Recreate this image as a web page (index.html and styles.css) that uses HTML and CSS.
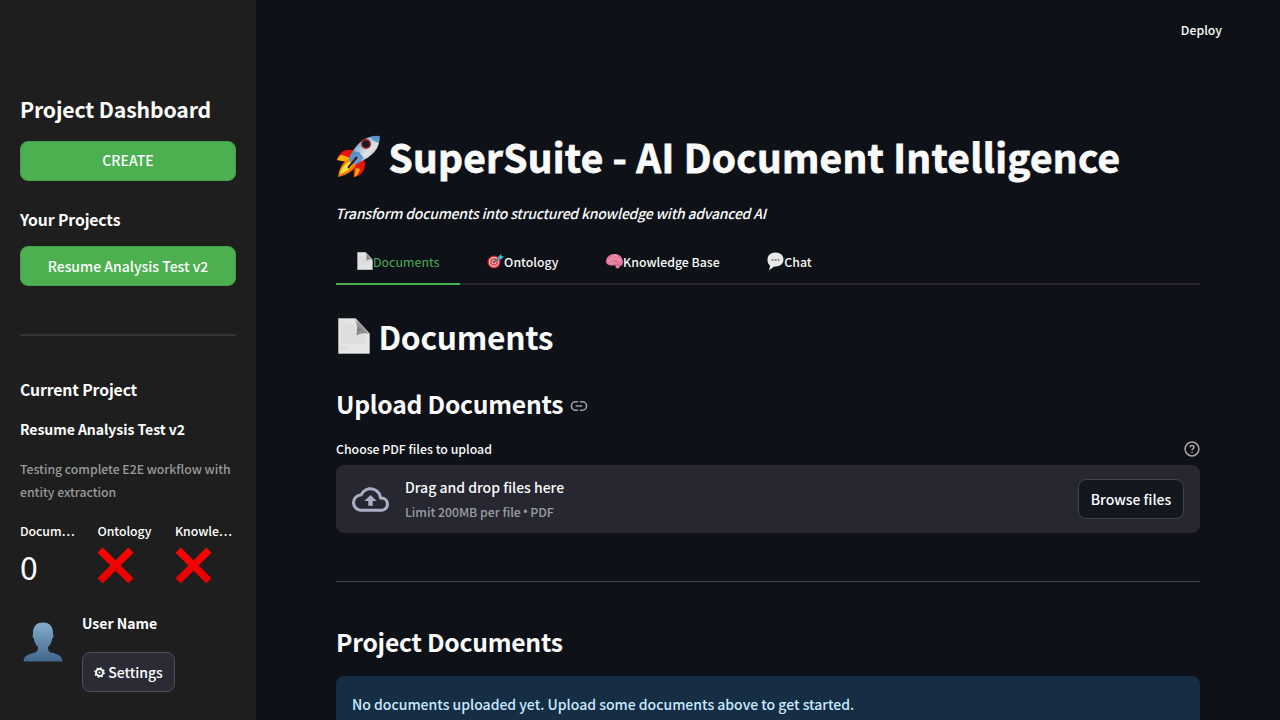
FILE: index.html
```
<!DOCTYPE html>
<html lang="en">
<head>
<meta charset="utf-8">
<title>SuperSuite</title>
<link rel="stylesheet" href="styles.css">
</head>
<body>
<svg class="defs" width="0" height="0">
  <defs>
    <linearGradient id="person" x1="0" y1="0" x2="0" y2="1"><stop offset="0" stop-color="#83adcd"/><stop offset="1" stop-color="#41658d"/></linearGradient>
    <linearGradient id="cross-fill" x1="0" y1="0" x2="0" y2="1"><stop offset="0" stop-color="#ff0500"/><stop offset="1" stop-color="#e30000"/></linearGradient>
    <linearGradient id="body-fill" x1="0" y1="0" x2="1" y2="1"><stop offset="0" stop-color="#3f7cb8"/><stop offset=".4" stop-color="#a9c4da"/><stop offset=".6" stop-color="#e4e6e6"/><stop offset="1" stop-color="#777c80"/></linearGradient>
    <linearGradient id="fold" x1="0" y1="1" x2="1" y2="0"><stop offset="0" stop-color="#4a4a4a"/><stop offset=".5" stop-color="#a8a8a8"/><stop offset="1" stop-color="#fff"/></linearGradient>
    <symbol id="cross" viewBox="0 0 36 36"><path fill="url(#cross-fill)" d="M5.500 .5 18 13 30.500 .5l5 5L23 18l12.500 12.500-5 5L18 23 5.500 35.500l-5-5L13 18 .5 5.500z"/></symbol>
    <symbol id="page" viewBox="0 0 32 37">
      <path fill="#e5e5e5" stroke="#c5c5c5" stroke-width=".6" d="M.5.5h17L31.500 16v20.500H.5z"/>
      <path stroke="#d0d0d0" stroke-width=".7" d="M3 4h6M3 7.500h13M3 9.500h14M3 11.500h14M3 13.500h14M3 15.500h14M3 17.500h24M3 19.500h25M3 21.500h25M3 23.500h24M3 25.500h23M3 30h6M3 32h8"/>
      <path fill="#777" d="M15.500.5C20 5 19 10 18.500 18c5-3 10-3 13-1z" opacity=".8"/>
      <path fill="url(#fold)" d="M17.500.5C21 4 21 9 19.500 13.500c4-2 9-1 12 2.500z"/>
    </symbol>
  </defs>
</svg>
<div class="app">
  <aside class="sidebar">
    <h2 class="side-title"><span>Project Dashboard</span></h2>
    <button class="btn-green">CREATE</button>
    <h3 class="side-heading your"><span>Your Projects</span></h3>
    <button class="btn-green project">Resume Analysis Test v2</button>
    <div class="side-rule"></div>
    <h3 class="side-heading">Current Project</h3>
    <p class="project-name">Resume Analysis Test v2</p>
    <p class="project-desc">Testing complete E2E workflow with<br>entity extraction</p>
    <div class="metrics">
      <div><div class="metric-label">Docum…</div><div class="metric-value">0</div></div>
      <div><div class="metric-label">Ontology</div><div class="metric-value"><svg width="37" height="37"><use href="#cross"/></svg></div></div>
      <div><div class="metric-label">Knowle…</div><div class="metric-value"><svg width="37" height="37"><use href="#cross"/></svg></div></div>
    </div>
    <div class="user">
      <svg class="avatar" width="40" height="40" viewBox="0 0 40 40"><path fill="url(#person)" d="M20 .5c7 0 10.500 4.500 10 12 1 .5.500 3-.8 4-.6 4-2 6.500-4.200 8.500 0 3 .5 4.500 3 5.500 5 1.500 11 2 11.500 9H.5c.5-7 6.500-7.500 11.500-9 2.500-1 3-2.500 3-5.500-2.200-2-3.600-4.500-4.200-8.500-1.300-1-1.800-3.500-.8-4C9.500 5 13 .5 20 .5z"/></svg>
      <div class="user-info">
        <p class="user-name">User Name</p>
        <button class="btn-settings"><svg width="11" height="11" viewBox="0 0 11 11"><circle cx="5.500" cy="5.500" r="3.500" fill="none" stroke="#fff" stroke-width="1.800"/><circle cx="5.500" cy="5.500" r="4.700" fill="none" stroke="#fff" stroke-width="1.300" stroke-dasharray="1.700 1.990"/><circle cx="5.500" cy="5.500" r="1" fill="#fff"/></svg><span>Settings</span></button>
      </div>
    </div>
  </aside>
  <main class="main">
    <header class="topbar"><span>Deploy</span></header>
    <section class="content">
      <h1 class="title">
        <svg width="45" height="44" viewBox="0 0 45 44">
          <path fill="#e91508" d="M1 25c2-7 7-11 14-10l5 1-8 11zM18 42c7-1 11-6 11-14l-2-6-10 10z"/>
          <path fill="#ffb000" d="M1 25c1-3 3-5 5-5l8 3-3 4zM18 42l2-9 4 1c-1 4-3 7-6 8z"/>
          <path fill="#f47b00" d="M13 24C4 29 3 36 2 42c7-2 14-4 18-12z"/>
          <path fill="#ffe23b" d="M14 26c-6 3-9 8-10 13 6-2 10-4 13-10z"/>
          <path fill="url(#body-fill)" d="M43.500 1C31 0 22 6 14 21c-1 3-1 5 1 7 2 2 4 2 7 0C37 21 44 14 43.500 1z"/>
          <path fill="#3a82c6" d="M43.500 1c-4-.6-7-.1-9 1 2 3 4 5 8 6 1-2 1-4 1-7zM17 16l6 1 5 6-5 5c-3 2-6 2-8 0s-2-4-1-7z" opacity=".75"/>
          <circle cx="30" cy="9" r="5" fill="#b91d20"/><circle cx="30" cy="9" r="3.600" fill="#131d24"/>
          <path stroke="#50100c" stroke-width="2" d="m12 33 9-11"/>
        </svg>
        <span>SuperSuite - AI Document Intelligence</span>
      </h1>
      <p class="subtitle"><span>Transform documents into structured knowledge with advanced AI</span></p>
      <nav class="tabs">
        <div class="tab active"><svg width="16" height="18"><use href="#page"/></svg><span>Documents</span></div>
        <div class="tab"><svg width="17" height="17" viewBox="0 0 17 17"><circle cx="7" cy="9" r="6.500" fill="#d72b32"/><circle cx="7" cy="9" r="4.400" fill="none" stroke="#f4d6d3" stroke-width="1.200"/><circle cx="7" cy="9" r="2" fill="none" stroke="#f4d6d3"/><path stroke="#267d92" stroke-width="1.500" d="m7 9 6-5"/><path fill="#45b5c9" d="m11 4 3-3 .5 2 2.500.5-3 3-3-.5z"/></svg><span>Ontology</span></div>
        <div class="tab"><svg width="17" height="17" viewBox="0 0 17 17"><path fill="#e8799b" d="M0 9C0 5 3 1 8 1c5-.5 8 3 9 7 0 3-1 5-3 5 0 2-2 3-4 2l-1-3c-3 1-8 1-9-3z"/><path fill="none" stroke="#fab4c8" stroke-width="1" d="M3 8c0-3 2-4 4-4M6 8c2 0 2-3 4-2s3 0 4 2M4 10c2 0 3-1 4 0M8 2c2 0 2 1 3 1"/><path fill="none" stroke="#b8476d" stroke-width=".6" d="M2 6c2 0 2-2 3-3M5 9c3 1 3-3 6-2M9 12c2-1 3-1 5 1"/></svg><span>Knowledge Base</span></div>
        <div class="tab"><svg width="17" height="18" viewBox="0 0 17 18"><path fill="#e9e9e9" d="M8.500.5c5 0 8 3 8 7s-3 7-8 7l-2 .2c-1 1.500-3 3-5 3 1-1 1.500-2.500 1.500-4C1 12 .5 10 .5 7.500c0-4 3-7 8-7z"/><path stroke="#777" stroke-width="1.500" d="M4.500 8h2m1 0h2m1 0h2"/></svg><span>Chat</span></div>
      </nav>
      <h2 class="page-heading"><svg width="32" height="36" viewBox="0 0 32 37" preserveAspectRatio="none"><use href="#page" width="32" height="37"/></svg><span>Documents</span></h2>
      <h3 class="section upload-heading"><span>Upload Documents</span><svg width="20" height="20" viewBox="0 0 24 24" fill="#9b9da1"><path d="M2 12c0-3.300 2.700-6 6-6h3v1.900H8a4.100 4.100 0 0 0 0 8.200h3V18H8c-3.300 0-6-2.700-6-6zm6-1h8v2H8zm8-5h-3v1.900h3a4.100 4.100 0 0 1 0 8.200h-3V18h3a6 6 0 0 0 0-12z"/></svg></h3>
      <div class="upload-label"><span>Choose PDF files to upload</span><svg width="16" height="16" viewBox="0 0 16 16" fill="none" stroke="#a3a4a8" stroke-width="1.500"><circle cx="8" cy="8" r="6.900"/><path d="M6 6.300C6.100 5.100 6.900 4.600 8 4.600s2 .7 2 1.700c0 1.300-2 1.500-2 3M8 10.700v1.400"/></svg></div>
      <div class="dropzone">
        <svg class="cloud" width="37" height="37" viewBox="0 0 24 24" fill="#a9aec4"><path d="M19.350 10.040A7.490 7.490 0 0 0 12 4C9.110 4 6.600 5.640 5.350 8.040A5.994 5.994 0 0 0 0 14c0 3.310 2.690 6 6 6h13c2.760 0 5-2.240 5-5 0-2.640-2.050-4.780-4.650-4.960zM19 18H6c-2.210 0-4-1.790-4-4 0-2.050 1.530-3.760 3.560-3.970l1.070-.11.5-.95A5.469 5.469 0 0 1 12 6c2.620 0 4.880 1.860 5.390 4.430l.3 1.500 1.530.11A2.980 2.980 0 0 1 22 15c0 1.650-1.350 3-3 3zM8 13h2.550v3h2.900v-3H16l-4-4z"/></svg>
        <div class="drop-text"><p class="drop-main">Drag and drop files here</p><p class="drop-sub">Limit 200MB per file <span class="bullet">•</span> PDF</p></div>
        <button class="btn-browse">Browse files</button>
      </div>
      <div class="rule"></div>
      <h3 class="section"><span>Project Documents</span></h3>
      <div class="notice">No documents uploaded yet. Upload some documents above to get started.</div>
    </section>
  </main>
</div>
</body>
</html>
```
FILE: styles.css
```
* { box-sizing: border-box; }
body { margin: 0; background: #0e1117; color: #fafafa; font-family: "Noto Sans CJK SC", "Noto Sans", sans-serif; font-size: 14px; font-weight: 500; line-height: 24px; overflow: hidden; }
h1, h2, h3, p { margin: 0; white-space: nowrap; }
svg { display: block; flex: none; }
.defs { position: absolute; }
button { font: inherit; color: #fff; border-radius: 8px; padding: 0; white-space: nowrap; }
.app { display: flex; height: 720px; overflow: hidden; }
.sidebar { width: 256px; flex: none; background: #1e1e1e; padding: 93px 20px 0; color: #fff; }
.side-title { font-size: 21.200px; letter-spacing: -.13px; font-weight: 700; line-height: 32px; margin-bottom: 16px; }
.btn-green { display: block; width: 216px; height: 40px; background: #4caf50; border: 1px solid #469f4a; line-height: 36px; padding-bottom: 2px; }
.project { padding-bottom: 0; line-height: 38px; }
.side-heading { font-size: 15.750px; letter-spacing: -.12px; font-weight: 700; line-height: 24px; }
.your { margin: 27px 0 14.400px; }
.side-rule { height: 2px; background: #343434; margin: 47.600px 0 42px; }
.project-name { font-weight: 700; letter-spacing: -.04px; margin-top: 15px; }
.project-desc { font-size: 12.300px; letter-spacing: -.035px; line-height: 23px; color: #999; margin-top: 17px; }
.metrics { display: grid; grid-template-columns: repeat(3, 61px); gap: 16.500px; margin-top: 17px; }
.metric-label { font-size: 12.300px; letter-spacing: -.06px; line-height: 20px; }
.metric-value { display: flex; align-items: flex-start; font-size: 32px; line-height: 51px; height: 52px; font-weight: 400; }
.metric-value svg { margin: 6px 0 0 -.4px; }
.user { display: flex; padding-left: 3px; gap: 19px; margin-top: 18px; }
.avatar { margin-top: 11px; }
.user-name { font-weight: 700; margin-bottom: 17px; }
.btn-settings { display: flex; width: 93px; height: 40px; align-items: center; justify-content: center; gap: 3px; background: #2b2b36; border: 1px solid #50505a; }
.btn-settings svg { margin-top: 1px; }
.main { flex: 1; min-width: 0; }
.topbar { height: 60px; padding: 0 58px; display: flex; align-items: center; justify-content: flex-end; font-size: 12.300px; }
.content { padding: 68px 80px 0; }
.title { display: flex; gap: 7.500px; align-items: center; font-size: 38.800px; letter-spacing: .28px; font-weight: 700; -webkit-text-stroke: .8px #fafafa; line-height: 56px; height: 56px; }
.title svg { margin: 2px .5px 0 -.5px; }
.subtitle { font-style: italic; letter-spacing: -.22px; margin: 17px 0 0 -.7px; }
.tabs { display: flex; height: 44px; margin-top: 16px; border-bottom: 2px solid #262730; margin-bottom: 25px; }
.tab { display: flex; align-items: center; font-size: 12.300px; height: 44px; border-bottom: 2px solid transparent; padding: 0 20px 0 21px; margin-right: 6.600px; white-space: nowrap; }
.tab svg { margin-top: -2px; }
.active { color: #4caf50; border-color: #4caf50; font-weight: 400; letter-spacing: .1px; }
.page-heading { display: flex; align-items: center; gap: 8.500px; padding-left: 2px; font-size: 31.800px; letter-spacing: -.35px; font-weight: 700; line-height: 52px; height: 52px; }
.page-heading svg { margin-top: 0; }
.section { font-size: 24.700px; letter-spacing: -.26px; font-weight: 700; line-height: 36px; }
.upload-heading { display: flex; align-items: center; gap: 6px; margin-top: 23px; }
.upload-heading svg { margin-top: 6px; }
.upload-label { display: flex; justify-content: space-between; align-items: center; font-size: 12.300px; height: 24px; margin: 16px 0 4px; }
.dropzone { display: flex; align-items: center; height: 68px; border-radius: 8px; background: #262730; padding: 0 16px; }
.drop-text { margin-left: 16px; flex: 1; }
.drop-sub { font-size: 12.300px; color: #9b9ca1; line-height: 22px; padding-top: 2px; letter-spacing: -.03px; }
.bullet { display: inline-block; width: 4px; text-indent: -.8px; font-family: "Open Sans", sans-serif; font-size: 14px; line-height: 1; }
.btn-browse { width: 106px; height: 40px; background: #131720; border: 1px solid #41444c; }
.rule { height: 1px; background: #3c3f44; margin: 48px 0 41px; }
.notice { margin-top: 17px; height: 57px; border-radius: 8px; background: #172d43; color: #c7ebff; padding: 16px; white-space: nowrap; }
```
